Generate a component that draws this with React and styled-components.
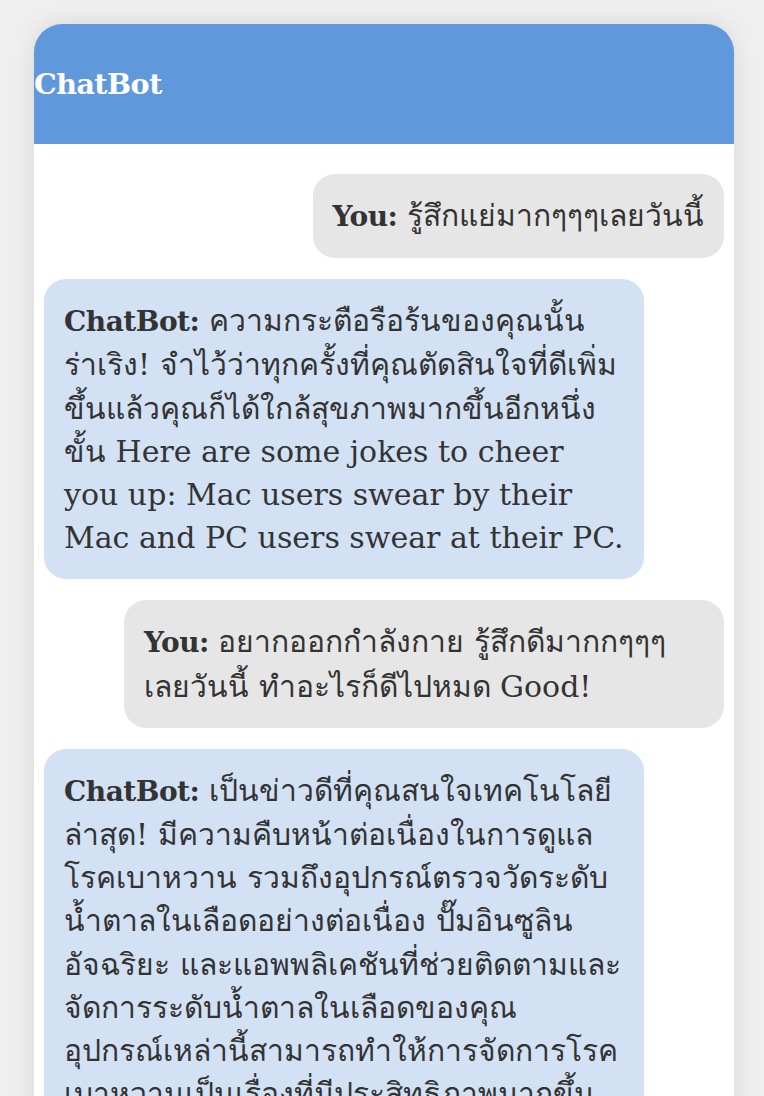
import React from 'react';
import styled, { createGlobalStyle } from 'styled-components';

const GlobalStyle = createGlobalStyle`
  html, body {
    margin: 0;
    padding: 0;
    background: #efefef;
  }
  body {
    font-family: 'DejaVu Serif', 'Liberation Serif', serif;
    color: #333333;
  }
`;

const Page = styled.div`
  padding: 24px 30px 0 34px;
  height: 1096px;
  box-sizing: border-box;
  overflow: hidden;
`;

const ChatWindow = styled.div`
  width: 700px;
  background: #ffffff;
  border-radius: 28px 28px 0 0;
  box-shadow: 0 0 22px rgba(0, 0, 0, 0.1);
  overflow: hidden;
`;

const Header = styled.header`
  height: 120px;
  display: flex;
  align-items: center;
  background: #6099db;
`;

const Title = styled.h1`
  margin: 0;
  font-size: 28.5px;
  font-weight: 700;
  color: #ffffff;
  letter-spacing: -0.5px;
`;

const MessageList = styled.div`
  display: flex;
  flex-direction: column;
  gap: 21px;
  padding: 30px 10px 20px;
`;

const Bubble = styled.div`
  max-width: 560px;
  padding: 20px 20px;
  border-radius: 22px;
  font-size: 30px;
  line-height: 43.2px;
  align-self: ${props => (props.$user ? 'flex-end' : 'flex-start')};
  background: ${props => (props.$user ? '#e6e6e6' : '#d2e1f4')};
`;

const Sender = styled.strong`
  font-size: 28px;
  font-weight: 700;
  letter-spacing: -0.5px;
`;

const messages = [
  { user: true, text: 'รู้สึกแย่มากๆๆๆเลยวันนี้' },
  {
    user: false,
    text: 'ความกระตือรือร้นของคุณนั้นร่าเริง! จำไว้ว่าทุกครั้งที่คุณตัดสินใจที่ดีเพิ่มขึ้นแล้วคุณก็ได้ใกล้สุขภาพมากขึ้นอีกหนึ่งขั้น Here are some jokes to cheer you up: Mac users swear by their Mac and PC users swear at their PC.',
  },
  { user: true, text: 'อยากออกกำลังกาย รู้สึกดีมากกๆๆๆ เลยวันนี้ ทำอะไรก็ดีไปหมด Good!' },
  {
    user: false,
    text: 'เป็นข่าวดีที่คุณสนใจเทคโนโลยีล่าสุด! มีความคืบหน้าต่อเนื่องในการดูแลโรคเบาหวาน รวมถึงอุปกรณ์ตรวจวัดระดับน้ำตาลในเลือดอย่างต่อเนื่อง ปั๊มอินซูลินอัจฉริยะ และแอพพลิเคชันที่ช่วยติดตามและจัดการระดับน้ำตาลในเลือดของคุณ อุปกรณ์เหล่านี้สามารถทำให้การจัดการโรคเบาหวานเป็นเรื่องที่มีประสิทธิภาพมากขึ้นและไม่ยุ่งยาก',
  },
];

const App = () => (
  <>
    <GlobalStyle />
    <Page>
      <ChatWindow>
        <Header>
          <Title>ChatBot</Title>
        </Header>
        <MessageList>
          {messages.map((m, i) => (
            <Bubble key={i} $user={m.user}>
              <Sender>{m.user ? 'You:' : 'ChatBot:'}</Sender> {m.text}
            </Bubble>
          ))}
        </MessageList>
      </ChatWindow>
    </Page>
  </>
);

export default App;
